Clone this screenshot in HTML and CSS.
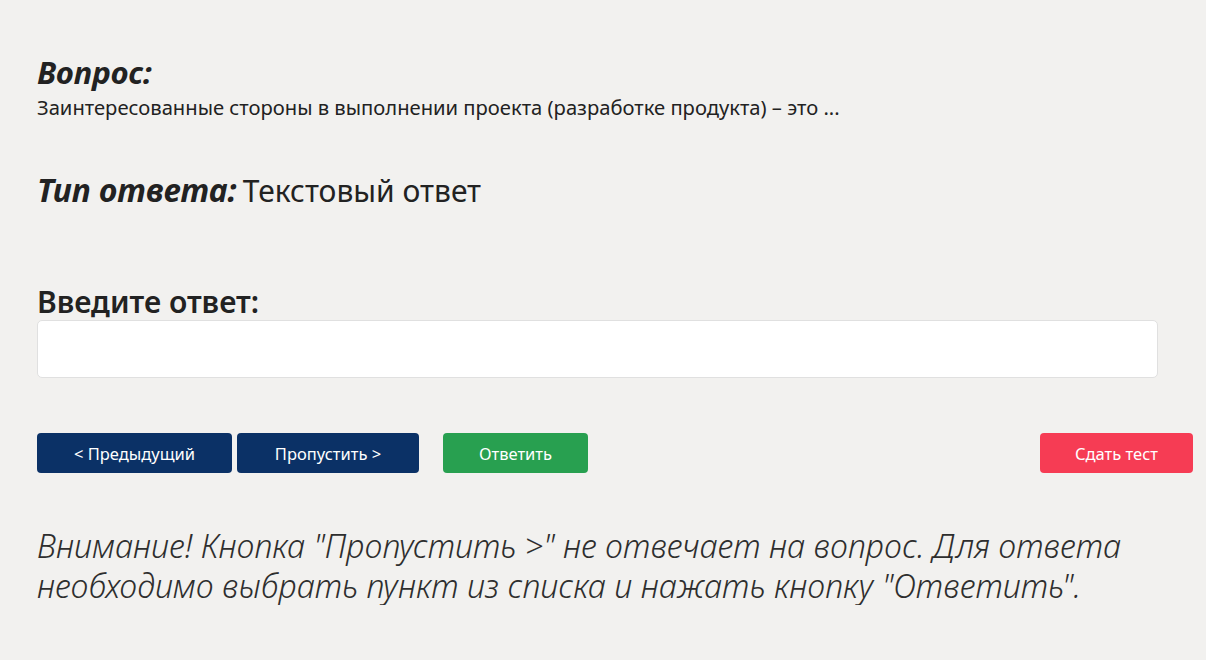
FILE: index.html
```html
<!DOCTYPE html>
<html lang="ru">
<head>
  <meta charset="UTF-8">
  <meta name="viewport" content="width=device-width, initial-scale=1.0">
  <title>Тест</title>
  <link rel="stylesheet" href="styles.css">
</head>
<body>
  <div class="page">
    <h3 class="label">Вопрос:</h3>
    <p class="question">Заинтересованные стороны в выполнении проекта (разработке продукта) – это ...</p>

    <div class="answer-type">
      <span class="label">Тип ответа:</span>
      <span class="type-value">Текстовый ответ</span>
    </div>

    <h3 class="input-label">Введите ответ:</h3>
    <input class="answer-input" type="text">

    <div class="buttons">
      <button class="btn btn-nav btn-prev">&lt; Предыдущий</button>
      <button class="btn btn-nav btn-skip">Пропустить &gt;</button>
      <button class="btn btn-answer">Ответить</button>
      <button class="btn btn-finish">Сдать тест</button>
    </div>

    <p class="warning">Внимание! Кнопка "Пропустить &gt;" не отвечает на вопрос. Для ответа необходимо выбрать пункт из списка и нажать кнопку "Ответить".</p>
  </div>
</body>
</html>
```

FILE: styles.css
```css
body {
  margin: 0;
  background-color: #f2f1ef;
  color: #222;
  font-family: "Noto Sans", "Open Sans", sans-serif;
}

.page {
  padding: 52px 13px 0 37px;
}

.label {
  margin: 0;
  font-size: 31px;
  font-weight: 700;
  font-style: italic;
  line-height: 40px;
}

.question {
  margin: 2px 0 0;
  font-size: 20.2px;
  line-height: 26px;
}

.answer-type {
  display: flex;
  align-items: baseline;
  gap: 6px;
  height: 40px;
  margin-top: 50px;
}

.answer-type .label {
  font-size: 32px;
}

.type-value {
  font-size: 30px;
  line-height: 40px;
}

.input-label {
  margin: 74px 0 0;
  font-size: 30px;
  font-weight: 600;
  line-height: 36px;
}

.answer-input {
  display: block;
  box-sizing: border-box;
  width: 97%;
  height: 58px;
  margin: 0;
  border: 1px solid #e0e0e0;
  border-radius: 5px;
  background-color: #fff;
}

.buttons {
  display: flex;
  margin-top: 55px;
}

.btn {
  height: 40px;
  border: none;
  border-radius: 4px;
  color: #fff;
  font-family: inherit;
  font-size: 16.5px;
  cursor: pointer;
}

.btn-nav {
  background-color: #0b3166;
}

.btn-prev {
  width: 195px;
}

.btn-skip {
  width: 182px;
  margin-left: 5px;
}

.btn-answer {
  width: 145px;
  margin-left: 24px;
  background-color: #28a050;
}

.btn-finish {
  width: 153px;
  margin-left: auto;
  background-color: #f63c54;
}

.warning {
  margin: 52px 0 0;
  font-size: 32.3px;
  font-style: italic;
  font-weight: 300;
  line-height: 40px;
  color: #2e2e2e;
  max-width: 1121px;
}
```
